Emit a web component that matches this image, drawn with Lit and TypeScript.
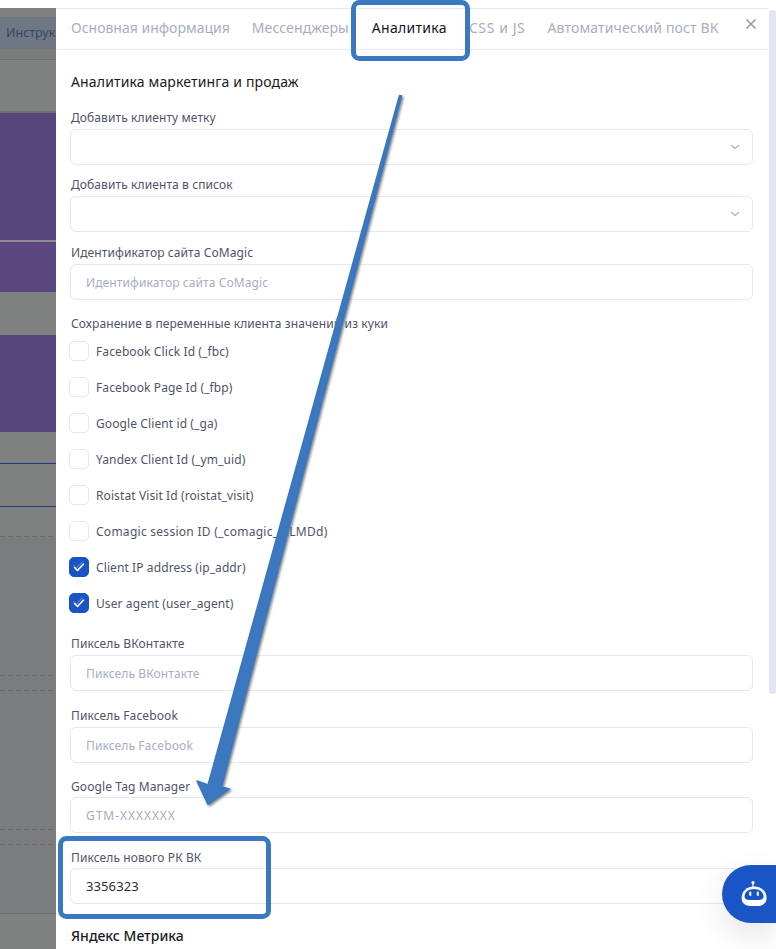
import { LitElement, html, css, svg } from "lit";
import { customElement } from "lit/decorators.js";

type Seg = [number, string];
const SEGS: Seg[] = [
  [9, "grey"], [32, "band"], [10, "dim"], [1, "rule"], [51, "grey"], [2, "rule"],
  [127, "purple"], [2, "pale"], [50, "violet"], [43, "grey"], [97, "purple"],
  [31, "grey"], [1, "navy"], [42, "grey"], [1, "navy"], [29, "grey"],
  [1, "dash"], [138, "dark"], [1, "dash"], [14, "dark"], [1, "dash"], [138, "dark"],
  [1, "dash"], [14, "dark"], [1, "dash"], [68, "dark"], [1, "rule2"], [36, "grey"],
];

const CHECKS: [string, boolean, string][] = [
  ["Facebook Click Id (_fbc)", false, ""],
  ["Facebook Page Id (_fbp)", false, ""],
  ["Google Client id (_ga)", false, ""],
  ["Yandex Client Id (_ym_uid)", false, ""],
  ["Roistat Visit Id (roistat_visit)", false, ""],
  ["Comagic session ID (_comagic_idLMDd)", false, "wide"],
  ["Client IP address (ip_addr)", true, ""],
  ["User agent (user_agent)", true, ""],
];

const TABS: [string, string][] = [
  ["Основная информация", "t0"],
  ["Мессенджеры", "t1"],
  ["Аналитика", "t2 active"],
  ["CSS и JS", "t3"],
  ["Автоматический пост ВК", "t4"],
];

@customElement("app-root")
export class AppRoot extends LitElement {
  static styles = css`
    :host {
      display: block;
      position: relative;
      width: 776px;
      height: 949px;
      overflow: hidden;
      background: #fff;
      font-family: "Noto Sans", "Open Sans", sans-serif;
    }
    .page { display: flex; height: 949px; padding-top: 8px; box-sizing: border-box; }
    .backdrop { width: 56px; flex: none; display: flex; flex-direction: column; overflow: hidden; }
    .seg { flex: none; position: relative; }
    .grey { background: #7f8080; }
    .dim { background: #7a7c7e; }
    .dark { background: #7c7d7f; }
    .band { background: #6f7782; color: #34466d; font-size: 12.5px; line-height: 32px; padding-left: 6px; white-space: nowrap; }
    .rule { background: #6c6d6e; }
    .rule2 { background: #6d6c70; }
    .purple { background: #55457a; }
    .violet { background: #5b4680; }
    .pale { background: #8d8d8d; }
    .navy { background: #1c3a7c; }
    .dash { background: repeating-linear-gradient(90deg, #696b72 0 5px, transparent 5px 8px), #7c7d7f; }

    .modal { flex: 1; min-width: 0; display: flex; flex-direction: column; position: relative; }
    .tabs {
      display: flex;
      gap: 22px;
      height: 37px;
      padding: 0 0 3px 15px;
      margin-right: 8px;
      border-top: 1px solid #e6e8f1;
      border-bottom: 1px solid #e6e8f1;
      align-items: center;
      flex: none;
      font-size: 14px;
      color: #a8aebb;
      white-space: nowrap;
    }
    .tab.t1 { letter-spacing: 0.1px; }
    .tab.t2 { letter-spacing: 0.3px; margin-left: 1px; }
    .tab.t3 { letter-spacing: 0.6px; }
    .tab.t4 { letter-spacing: 0.15px; }
    .tab.active { color: #15171f; }
    .close { position: absolute; left: 690px; top: 11px; width: 10px; height: 10px; }
    .thumb { position: absolute; right: 0; top: 2px; width: 7px; height: 684px; background: #e3e6f0; border-radius: 3px; }
    .body { padding: 22px 23px 0 14px; }
    h2 { margin: 0; font-size: 14px; font-weight: 400; line-height: 20px; color: #191b24; letter-spacing: 0.15px; padding-left: 1px; }
    h2.ya { font-weight: 500; letter-spacing: 0; margin-top: 22px; }
    .lab { font-size: 12px; line-height: 19px; color: #4f5469; display: block; letter-spacing: 0.1px; padding-left: 1px; }
    .ctl {
      height: 36px;
      box-sizing: border-box;
      margin-top: 2px;
      border: 1px solid #e5e8f2;
      border-radius: 6px;
      display: flex;
      align-items: center;
      justify-content: space-between;
      padding: 0 12px 0 15px;
      font-size: 12px;
      letter-spacing: 0.1px;
      color: #a6adc4;
    }
    .ctl.val { color: #2a2d38; font-size: 13px; }
    .ctl.gtm { letter-spacing: 0.95px; }
    .tight .ctl { margin-top: 1px; }
    .field { margin-top: 10px; }
    .field.first { margin-top: 16px; }
    .field.g11 { margin-top: 11px; }
    .field.g14 { margin-top: 14px; }
    .field.g15 { margin-top: 15px; }
    .field.g21 { margin-top: 21px; }
    .checks { display: flex; flex-direction: column; gap: 16px; margin-top: 8px; }
    .check { display: flex; align-items: center; gap: 7px; height: 20px; font-size: 12px; color: #4f5469; letter-spacing: 0.1px; margin-left: -1px; }
    .check.wide { letter-spacing: 0.27px; }
    .box { width: 20px; height: 20px; box-sizing: border-box; border: 1px solid #e5e8f2; border-radius: 5px; flex: none; }
    .box.on { background: #1a53c4; border-color: #1a53c4; }
    .box svg { display: block; }
    .overlay { position: absolute; left: 0; top: 0; pointer-events: none; }
    .chat {
      position: absolute;
      left: 722px;
      top: 865px;
      width: 54px;
      height: 58px;
      box-sizing: border-box;
      padding-left: 9px;
      border-radius: 29px 0 0 29px;
      background: #1a55c5;
      box-shadow: 0 12px 30px rgba(40, 50, 80, 0.12);
      display: flex;
      align-items: center;
      justify-content: center;
    }
  `;

  private field(label: string, ph: string, cls = "") {
    return html`<div class="field ${cls}">
      <span class="lab">${label}</span>
      <div class="ctl">${ph}</div>
    </div>`;
  }

  private select(label: string, cls = "") {
    return html`<div class="field ${cls}">
      <span class="lab">${label}</span>
      <div class="ctl">
        <span></span>
        <svg width="10" height="6" viewBox="0 0 10 6" fill="none" stroke="#a9b2c8" stroke-width="1.2" stroke-linecap="round">
          <path d="M1.5 1.5 5 4.5 8.5 1.5" />
        </svg>
      </div>
    </div>`;
  }

  render() {
    return html`
      <div class="page">
        <div class="backdrop">
          ${SEGS.map(([h, c], i) => html`<div class="seg ${c}" style="height:${h}px">${i === 1 ? "Инструкции" : ""}</div>`)}
        </div>
        <div class="modal">
          <div class="tabs">
            ${TABS.map(([t, c]) => html`<span class="tab ${c}">${t}</span>`)}
          </div>
          <svg class="close" viewBox="0 0 10 10" fill="none" stroke="#8e98ab" stroke-width="1.5"><path d="M.5.5l9 9M9.5.5l-9 9" /></svg>
          <div class="thumb"></div>
          <div class="body">
            <h2>Аналитика маркетинга и продаж</h2>
            ${this.select("Добавить клиенту метку", "first")}
            ${this.select("Добавить клиента в список")}
            ${this.field("Идентификатор сайта CoMagic", "Идентификатор сайта CoMagic", "g11")}
            <div class="field g14"><span class="lab">Сохранение в переменные клиента значений из куки</span></div>
            <div class="checks">
              ${CHECKS.map(([t, on, cls]) => html`<div class="check ${cls}">
                <div class="box ${on ? "on" : ""}">
                  ${on
                    ? html`<svg width="18" height="18" viewBox="0 0 18 18" fill="none" stroke-linecap="round" stroke-linejoin="round">
                        <path d="M3.5 7.5 6.5 10 12 4" stroke="#4a7bdc" stroke-width="1.2" />
                        <path d="M4.5 9.5 7.5 12.5 13.5 6" stroke="#fff" stroke-width="1.6" />
                      </svg>`
                    : ""}
                </div>
                <span>${t}</span>
              </div>`)}
            </div>
            ${this.field("Пиксель ВКонтакте", "Пиксель ВКонтакте", "g21")}
            ${this.field("Пиксель Facebook", "Пиксель Facebook", "g15")}
            <div class="field g14 tight"><span class="lab">Google Tag Manager</span><div class="ctl gtm">GTM-XXXXXXX</div></div>
            <div class="field g15 tight"><span class="lab">Пиксель нового РК ВК</span><div class="ctl val">3356323</div></div>
            <h2 class="ya">Яндекс Метрика</h2>
          </div>
        </div>
      </div>
      <div class="chat">
        <svg width="28" height="28" viewBox="0 0 28 28">
          <circle cx="13" cy="2.6" r="1.6" fill="#fff" />
          <rect x="12.4" y="3" width="1.2" height="4" fill="#fff" />
          <path d="M14 6.5C7 6.5 1.6 11 1.6 18c0 5 3.6 8 9 8h7c5.4 0 9-3 9-8 0-7-5.400-11.500-12.600-11.500z" fill="#fff" />
          <path d="M14 9C8.500 9 4.500 12 4.500 16.500c0 2.500 2 3.500 5 3.500h9c3 0 5-1 5-3.500C23.500 12 19.500 9 14 9z" fill="#1a55c5" />
          <rect x="9.300" y="11.500" width="2" height="4.500" rx="1" fill="#fff" />
          <rect x="16.800" y="11.500" width="2" height="4.500" rx="1" fill="#fff" />
        </svg>
      </div>
      <svg class="overlay" width="776" height="949" viewBox="0 0 776 949">
        ${svg`
          <defs>
            <filter id="sh" x="-10%" y="-10%" width="120%" height="120%">
              <feDropShadow dx="1.500" dy="1.500" stdDeviation="0.800" flood-color="#555" flood-opacity="0.7" />
            </filter>
          </defs>
          <path filter="url(#sh)" fill="#3a78bf" stroke="#3a78bf" stroke-width="1.500" stroke-linejoin="round"
            d="M399.500 95.500 208 785 197 781 208 804.500 229.500 789 221.500 787 401.500 96z" />
          <rect x="353.500" y="2.500" width="114" height="56" rx="6" fill="none" stroke="#3a78bf" stroke-width="5" />
          <rect x="60.500" y="838.500" width="208" height="78" rx="6" fill="none" stroke="#3a78bf" stroke-width="5" />
        `}
      </svg>
    `;
  }
}
